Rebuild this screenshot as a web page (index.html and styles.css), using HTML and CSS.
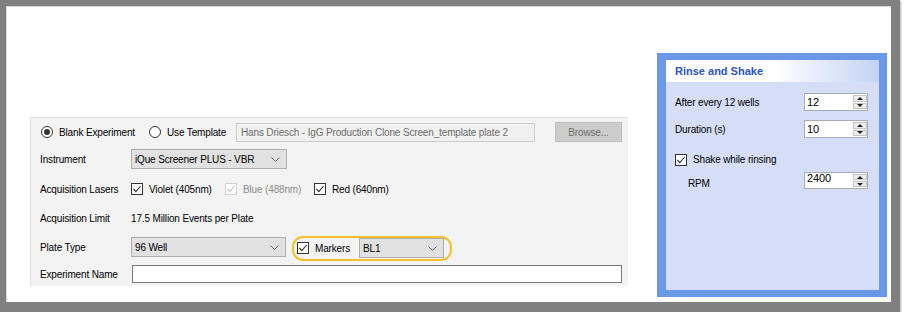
FILE: index.html
```html
<!DOCTYPE html>
<html lang="en">
<head>
    <meta charset="UTF-8">
    <meta name="viewport" content="width=device-width, initial-scale=1.0">
    <title>New Experiment - Rinse and Shake</title>
    <link rel="stylesheet" href="styles.css">
</head>
<body>
    <div class="frame">
        <div class="canvas">

            <!-- Experiment setup form -->
            <div class="setup-panel">
                <div class="row">
                    <label class="radio-option first">
                        <span class="radio checked"></span>
                        <span>Blank Experiment</span>
                    </label>
                    <label class="radio-option second">
                        <span class="radio"></span>
                        <span>Use Template</span>
                    </label>
                    <div class="textbox disabled">Hans Driesch - IgG Production Clone Screen_template plate 2</div>
                    <button class="browse-btn">Browse...</button>
                </div>

                <div class="row row-instrument">
                    <span class="field-label">Instrument</span>
                    <div class="combo combo-instrument">
                        <span>iQue Screener PLUS - VBR</span>
                        <svg class="chevron" viewBox="0 0 9 5"><path d="M0.5 0.5 L4.5 4.5 L8.5 0.5" fill="none" stroke="#666"/></svg>
                    </div>
                </div>

                <div class="row row-lasers">
                    <span class="field-label">Acquisition Lasers</span>
                    <label class="check-option violet">
                        <svg class="check" viewBox="0 0 12 12"><rect x="0.5" y="0.5" width="11" height="11" fill="#fff" stroke="#333"/><path d="M2.4 6 L4.9 8.6 L9.6 3" fill="none" stroke="#333" stroke-width="1.1"/></svg>
                        <span>Violet (405nm)</span>
                    </label>
                    <label class="check-option blue disabled">
                        <svg class="check" viewBox="0 0 12 12"><rect x="0.5" y="0.5" width="11" height="11" fill="#fff" stroke="#d2d2d2"/><path d="M2.4 6 L4.9 8.6 L9.6 3" fill="none" stroke="#c4c4c4" stroke-width="1.1"/></svg>
                        <span>Blue (488nm)</span>
                    </label>
                    <label class="check-option">
                        <svg class="check" viewBox="0 0 12 12"><rect x="0.5" y="0.5" width="11" height="11" fill="#fff" stroke="#333"/><path d="M2.4 6 L4.9 8.6 L9.6 3" fill="none" stroke="#333" stroke-width="1.1"/></svg>
                        <span>Red (640nm)</span>
                    </label>
                </div>

                <div class="row row-limit">
                    <span class="field-label">Acquisition Limit</span>
                    <span>17.5 Million Events per Plate</span>
                </div>

                <div class="row row-plate">
                    <span class="field-label">Plate Type</span>
                    <div class="combo combo-plate">
                        <span>96 Well</span>
                        <svg class="chevron" viewBox="0 0 9 5"><path d="M0.5 0.5 L4.5 4.5 L8.5 0.5" fill="none" stroke="#666"/></svg>
                    </div>
                    <div class="highlight">
                        <label class="check-option">
                            <svg class="check" viewBox="0 0 12 12"><rect x="0.5" y="0.5" width="11" height="11" fill="#fff" stroke="#333"/><path d="M2.4 6 L4.9 8.6 L9.6 3" fill="none" stroke="#333" stroke-width="1.1"/></svg>
                            <span>Markers</span>
                        </label>
                        <div class="combo combo-markers">
                            <span>BL1</span>
                            <svg class="chevron" viewBox="0 0 9 5"><path d="M0.5 0.5 L4.5 4.5 L8.5 0.5" fill="none" stroke="#666"/></svg>
                        </div>
                    </div>
                </div>

                <div class="row row-name">
                    <span class="field-label">Experiment Name</span>
                    <div class="textbox name-input"></div>
                </div>
            </div>

            <!-- Rinse and shake settings -->
            <div class="rinse-panel">
                <div class="rinse-header">Rinse and Shake</div>
                <div class="rinse-body">
                    <div class="spin-row">
                        <span>After every 12 wells</span>
                        <div class="spinner">
                            <span class="spinner-value">12</span>
                            <div class="spin-buttons">
                                <span class="spin-btn up"></span>
                                <span class="spin-btn down"></span>
                            </div>
                        </div>
                    </div>
                    <div class="spin-row duration-row">
                        <span>Duration (s)</span>
                        <div class="spinner">
                            <span class="spinner-value">10</span>
                            <div class="spin-buttons">
                                <span class="spin-btn up"></span>
                                <span class="spin-btn down"></span>
                            </div>
                        </div>
                    </div>
                    <label class="check-option shake-row">
                        <svg class="check" viewBox="0 0 12 12"><rect x="0.5" y="0.5" width="11" height="11" fill="#fff" stroke="#333"/><path d="M2.4 6 L4.9 8.6 L9.6 3" fill="none" stroke="#333" stroke-width="1.1"/></svg>
                        <span>Shake while rinsing</span>
                    </label>
                    <div class="spin-row rpm-row">
                        <span class="rpm-label">RPM</span>
                        <div class="spinner rpm-spinner">
                            <span class="spinner-value">2400</span>
                            <div class="spin-buttons">
                                <span class="spin-btn up"></span>
                                <span class="spin-btn down"></span>
                            </div>
                        </div>
                    </div>
                </div>
            </div>

        </div>
    </div>
</body>
</html>
```

FILE: styles.css
```css
body {
    margin: 0;
    font-family: "Liberation Sans", Arial, sans-serif;
    font-size: 10px;
    letter-spacing: -0.15px;
    color: #000;
    background-color: #fff;
}

.frame {
    width: 900px;
    height: 312px;
    box-sizing: border-box;
    border-style: solid;
    border-color: #808080;
    border-width: 6px 9px 10px 6px;
    box-shadow: 1px 1px 2px rgba(0, 0, 0, 0.3);
}

.canvas {
    height: 100%;
    box-sizing: border-box;
    border-top: 1px solid #d6d6d6;
    border-left: 1px solid #d6d6d6;
    background-color: #fff;
    display: flex;
    align-items: flex-start;
}

/* left form */
.setup-panel {
    margin: 110px 0 0 23px;
    width: 598px;
    box-sizing: border-box;
    background-color: #f3f3f3;
    border-top: 1px solid #dce1e9;
    border-left: 1px solid #dce1e9;
    padding: 4px 0 3px 9px;
}

.row {
    display: flex;
    align-items: center;
    height: 20px;
}

.row-instrument { margin-top: 7px; }
.row-lasers { margin-top: 10px; }
.row-limit { margin-top: 9px; }
.row-plate { margin-top: 9px; }
.row-name { margin-top: 8px; height: 18px; }

.field-label {
    width: 91px;
    flex-shrink: 0;
}

.radio-option {
    display: flex;
    align-items: center;
    gap: 6px;
}

.radio-option.first {
    width: 108px;
    padding-left: 1px;
}

.radio-option.second {
    width: 87px;
}

.radio {
    width: 12px;
    height: 12px;
    box-sizing: border-box;
    border: 1px solid #333;
    border-radius: 50%;
    background-color: #fff;
    display: flex;
    align-items: center;
    justify-content: center;
}

.radio.checked::after {
    content: "";
    width: 6px;
    height: 6px;
    border-radius: 50%;
    background-color: #333;
}

.textbox {
    height: 19px;
    box-sizing: border-box;
    border: 1px solid #7a7a7a;
    background-color: #fff;
}

.textbox.disabled {
    width: 299px;
    margin-right: 20px;
    border-color: #cdcdcd;
    background-color: #f0f0f0;
    color: #6d6d6d;
    padding-left: 4px;
    line-height: 17px;
    white-space: nowrap;
}

.browse-btn {
    width: 67px;
    height: 20px;
    padding: 0;
    border: 1px solid #bfbfbf;
    background-color: #cccccc;
    color: #6d6d6d;
    font-family: inherit;
    font-size: 10px;
    letter-spacing: -0.15px;
}

.combo {
    height: 20px;
    box-sizing: border-box;
    border: 1px solid #adadad;
    background-color: #e1e1e1;
    display: flex;
    align-items: center;
    justify-content: space-between;
    padding: 0 6px 0 3px;
}

.combo-instrument { width: 156px; }
.combo-plate { width: 155px; }

.combo-markers {
    width: 85px;
    margin-left: auto;
}

.chevron {
    width: 9px;
    height: 5px;
}

.check-option {
    display: flex;
    align-items: center;
    gap: 6px;
}

.check-option.violet { width: 94px; }
.check-option.blue { width: 89px; }

.check-option.disabled {
    color: #8c8c8c;
}

.check {
    width: 12px;
    height: 12px;
    flex-shrink: 0;
}

.highlight {
    width: 160px;
    height: 25px;
    margin: 2px 0 0 6px;
    box-sizing: border-box;
    border: 2px solid #f5bf2a;
    border-radius: 11px;
    display: flex;
    align-items: center;
    padding: 0 6px 0 3px;
}

.name-input {
    width: 490px;
    height: 18px;
    margin-left: 1px;
}

/* right settings panel */
.rinse-panel {
    margin: 46px 0 0 29px;
    width: 230px;
    height: 244px;
    box-sizing: border-box;
    border-style: solid;
    border-color: #6b97e9;
    border-width: 7px 8px 7px 9px;
    background-color: #d5def6;
}

.rinse-header {
    height: 22px;
    display: flex;
    align-items: center;
    padding-left: 9px;
    background: linear-gradient(90deg, #fff 50%, #c3d3f4);
    color: #2b56c6;
    font-size: 11px;
    font-weight: bold;
    letter-spacing: 0;
}

.rinse-body {
    padding: 11px 11px 0 9px;
}

.spin-row {
    display: flex;
    justify-content: space-between;
    align-items: center;
    height: 18px;
}

.duration-row { margin-top: 9px; }

.shake-row {
    margin-top: 15px;
    height: 13px;
}

.rpm-row {
    margin-top: 6px;
    height: 17px;
    align-items: flex-end;
}

.rpm-label {
    padding-left: 13px;
    line-height: 11px;
}

.spinner {
    width: 64px;
    height: 18px;
    box-sizing: border-box;
    border: 1px solid #a9acb4;
    background-color: #fff;
    display: flex;
}

.rpm-spinner { height: 17px; }

.spinner-value {
    flex: 1;
    padding-left: 2px;
    line-height: 16px;
    font-size: 11px;
}

.rpm-spinner .spinner-value {
    line-height: 10px;
}

.spin-buttons {
    width: 14px;
    margin: 1px 0 1px 0;
    display: flex;
    flex-direction: column;
    gap: 1px;
}

.spin-btn {
    flex: 1;
    box-sizing: border-box;
    border: 1px solid #c5c5c5;
    background-color: #ececec;
    display: flex;
    align-items: center;
    justify-content: center;
}

.spin-btn::before {
    content: "";
    width: 0;
    height: 0;
    border-left: 3px solid transparent;
    border-right: 3px solid transparent;
}

.spin-btn.up::before { border-bottom: 3px solid #222; }
.spin-btn.down::before { border-top: 3px solid #222; }
```
